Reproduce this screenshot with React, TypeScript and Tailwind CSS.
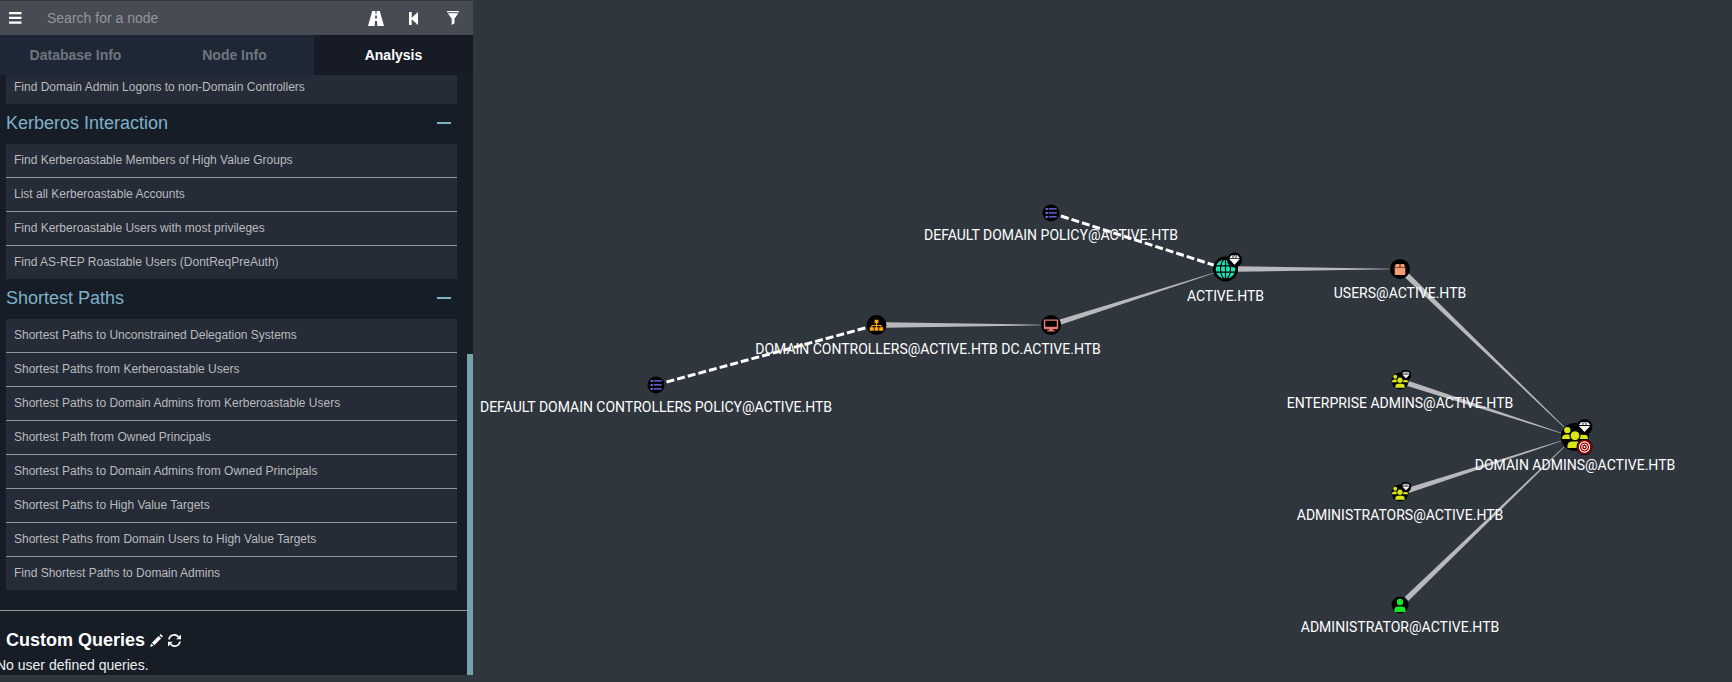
import type { ReactNode } from 'react';

type Icon = 'list' | 'sitemap' | 'globe' | 'desktop' | 'box' | 'users' | 'user';
type GraphNode = { x: number; y: number; r: number; color: string; icon: Icon; label: string; baseline: number; w: number };
type Pt = [number, number];

const nodes: GraphNode[] = [
  { x: 656, y: 385, r: 8.5, color: '#7f72fd', icon: 'list', label: 'DEFAULT DOMAIN CONTROLLERS POLICY@ACTIVE.HTB', baseline: 412, w: 352 },
  { x: 876.5, y: 325, r: 10, color: '#ffaa00', icon: 'sitemap', label: 'DOMAIN CONTROLLERS@ACTIVE.HTB', baseline: 354, w: 242.5 },
  { x: 1051, y: 213, r: 8.5, color: '#7f72fd', icon: 'list', label: 'DEFAULT DOMAIN POLICY@ACTIVE.HTB', baseline: 240, w: 254 },
  { x: 1051, y: 325, r: 10, color: '#e67873', icon: 'desktop', label: 'DC.ACTIVE.HTB', baseline: 354, w: 99.5 },
  { x: 1225.5, y: 269, r: 12.5, color: '#17e6b9', icon: 'globe', label: 'ACTIVE.HTB', baseline: 301, w: 77 },
  { x: 1400, y: 269, r: 10, color: '#f79a78', icon: 'box', label: 'USERS@ACTIVE.HTB', baseline: 298, w: 132.5 },
  { x: 1400, y: 381, r: 8.5, color: '#dbe617', icon: 'users', label: 'ENTERPRISE ADMINS@ACTIVE.HTB', baseline: 408, w: 226.5 },
  { x: 1400, y: 493, r: 8.5, color: '#dbe617', icon: 'users', label: 'ADMINISTRATORS@ACTIVE.HTB', baseline: 520, w: 206.5 },
  { x: 1400, y: 605, r: 8.5, color: '#17e625', icon: 'user', label: 'ADMINISTRATOR@ACTIVE.HTB', baseline: 632, w: 198.5 },
  { x: 1575, y: 437, r: 14, color: '#dbe617', icon: 'users', label: 'DOMAIN ADMINS@ACTIVE.HTB', baseline: 470, w: 200.5 },
];

const tapered: [Pt, Pt][] = [
  [[886, 325], [1041, 325]],
  [[1060.5, 322], [1214, 273]],
  [[1238, 269], [1390, 269]],
  [[1407, 275.5], [1564, 427]],
  [[1408, 383.5], [1561, 433]],
  [[1408, 490.5], [1561, 441]],
  [[1406.5, 599], [1564, 447]],
];

function wedge([x1, y1]: Pt, [x2, y2]: Pt) {
  const len = Math.hypot(x2 - x1, y2 - y1);
  const nx = -(y2 - y1) / len;
  const ny = (x2 - x1) / len;
  const a = 2.7;
  const b = 0.35;
  return [
    [x1 + nx * a, y1 + ny * a],
    [x2 + nx * b, y2 + ny * b],
    [x2 - nx * b, y2 - ny * b],
    [x1 - nx * a, y1 - ny * a],
  ].map((p) => p.join(',')).join(' ');
}

function Glyph({ icon, color }: { icon: Icon; color: string }) {
  switch (icon) {
    case 'list':
      return (
        <path d="M-5.300-5h2v2h-2zM-5.300-1h2v2h-2zM-5.300 3h2v2h-2zM-2.300-4.700H5.700v1.300H-2.300zM-2.300-.7H5.700V.6H-2.300zM-2.300 3.200H5.700v1.300H-2.300z" />
      );
    case 'sitemap':
      return (
        <>
          <path d="M-1.900-5.200h3.800v3.400h-3.800zM-6.700 2.200h4v3.600h-4zM-1.900 2.200h3.800v3.600h-3.800zM2.700 2.200h4v3.600h-4z" />
          <path d="M0-2v4.500M-4.700 2.500V.5h9.400v2" fill="none" stroke={color} strokeWidth="1" />
        </>
      );
    case 'globe':
      return (
        <>
          <circle r="9.800" />
          <g fill="none" stroke="#000" strokeWidth="1.200">
            <ellipse rx="5" ry="10" />
            <path d="M0-10v20M-10-3.200h20M-10 3.200h20" />
          </g>
        </>
      );
    case 'desktop':
      return (
        <path
          fillRule="evenodd"
          d="M-6.200-5.500H6.200q1 0 1 1v7.700q0 1-1 1H2V5.300h1.800v1.200h-7.600V5.300H-2V4.200h-4.200q-1 0-1-1v-7.700q0-1 1-1zM-5.700-4.200V1.700H5.700V-4.200z"
        />
      );
    case 'box':
      return <path d="M-4-5h3.600v3h-5zM.400-5H4l1 3H.400zM-5.300-1.400H5.300V5q0 1-1 1h-8.600q-1 0-1-1z" />;
    case 'users':
      return (
        <>
          <circle cx="-7.700" cy="-6.900" r="3.200" />
          <circle cx="7.700" cy="-6.900" r="3.200" />
          <path d="M-13 2q0-4.500 4-4.500h3.500L-5 2zM13 2q0-4.500-4-4.500H5.500L5 2z" />
          <circle cx="0" cy="-1.300" r="4.900" stroke="#000" strokeWidth="1" />
          <path d="M-7.500 11V9q0-4.500 4.500-4.500h6q4.500 0 4.500 4.500v2z" />
        </>
      );
    case 'user':
      return (
        <>
          <circle cx="0" cy="-3" r="3.200" />
          <path d="M-5.600 7V5.500Q-5.600 1.500-2 1.500h4q3.600 0 3.600 4V7z" />
        </>
      );
  }
}

function Diamond({ x, y, r }: { x: number; y: number; r: number }) {
  return (
    <g transform={`translate(${x} ${y}) scale(${r / 7.5})`}>
      <circle r="7.500" fill="#000" />
      <path d="M-3-4.800h6l2.300 3H-5.300zM-5.300-.9H5.300L0 4.800z" fill="#fff" />
      <path d="M-2.500-5l1 3L0-5l1.500 3 1-3" fill="none" stroke="#000" strokeWidth=".5" />
    </g>
  );
}

function Graph() {
  return (
    <svg className="block h-[682px] w-[1259px]" viewBox="473 0 1259 682">
      {tapered.map(([a, b]) => (
        <polygon key={`${a}-${b}`} points={wedge(a, b)} fill="#b8b8bd" />
      ))}
      <g stroke="#fff" strokeWidth="3" strokeDasharray="8 3">
        <path d="M666.500 382 867 327.500" />
        <path d="M1061 216 1214 265.200" />
      </g>
      {nodes.map((n) => (
        <g key={n.label}>
          <circle cx={n.x} cy={n.y} r={n.r} fill="#000" />
          <g transform={`translate(${n.x} ${n.y}) scale(${n.icon === 'users' && n.r < 10 ? 0.62 : 1})`} fill={n.color}>
            <Glyph icon={n.icon} color={n.color} />
          </g>
          <text x={n.x} y={n.baseline} textAnchor="middle" textLength={n.w} fill="#fff" className="font-['Roboto',sans-serif] text-[14px]">
            {n.label}
          </text>
        </g>
      ))}
      <Diamond x={1234.5} y={260} r={7.5} />
      <Diamond x={1406} y={375} r={5.2} />
      <Diamond x={1406} y={487} r={5.2} />
      <Diamond x={1584.5} y={427} r={8} />
      <g transform="translate(1584.500 447)" fill="none">
        <circle r="8" fill="#000" />
        <circle r="7.300" fill="#990000" />
        <circle r="5.100" stroke="#fff" strokeWidth="1.100" />
        <circle r="2.900" stroke="#fff" strokeWidth="1" />
        <circle r="1" fill="#fff" />
      </g>
    </svg>
  );
}

function QueryList({ items }: { items: string[] }) {
  return (
    <div className="ml-1.5 w-[451px] divide-y divide-[#97989b] bg-[#252b37]">
      {items.map((t, i) => (
        <div key={t} className={`${i === items.length - 1 ? 'h-[33px]' : 'h-[34px]'} pl-2 text-[12px] leading-[32px] text-[#b9bbbd]`}>
          {t}
        </div>
      ))}
    </div>
  );
}

function SectionTitle({ children }: { children: ReactNode }) {
  return (
    <div className="flex h-10 items-center justify-between pb-[2px] pl-1.5 pr-4 text-[18px] text-[#7fb1c7]">
      <span>{children}</span>
      <span className="h-0.5 w-3.5 bg-[#7fb1c7]" />
    </div>
  );
}

export default function App() {
  return (
    <div className="flex h-[682px] w-[1732px] overflow-hidden bg-[#2f363e] font-['Liberation_Sans',sans-serif]">
      <aside className="mt-px flex h-[674px] w-[473px] shrink-0 flex-col bg-[#161d27]">
        <div className="flex h-[34px] shrink-0 items-center bg-[#464b54] text-white">
          <svg className="ml-[9px] h-[13px] w-[13px]" viewBox="0 0 13 13" fill="currentColor">
            <path d="M0 0h12.500v2.200H0zM0 4.800h12.500V7H0zM0 9.600h12.500v2.200H0z" />
          </svg>
          <span className="ml-[25px] flex-1 text-[14px] text-[#94969a]">Search for a node</span>
          <svg className="mr-[25px] h-[15px] w-4" viewBox="0 0 16 15">
            <path d="M4.200 0h7.600L16 15H0z" fill="currentColor" />
            <path d="M7.400 0h1.200v2.500H7.400zM7.200 4.500h1.600l.2 3H7zM7 10h2l.3 5H6.700z" fill="#464b54" />
          </svg>
          <svg className="mr-[29px] h-[13px] w-[9px]" viewBox="0 0 9 13" fill="currentColor">
            <path d="M0 0h2.700v5.700L9 0v13L2.700 7.300V13H0z" />
          </svg>
          <svg className="mr-3.5 h-[14px] w-3" viewBox="0 0 12 14" fill="currentColor">
            <path d="M0 0h12v1.300H0zM.8 2.200h10.400L7.500 7.700v4.500L4.700 14V7.700z" />
          </svg>
        </div>
        <div className="flex h-10 shrink-0 text-center text-[14px] font-bold leading-10">
          <div className="w-[151px] bg-[#1e2735] text-[#70757d]">Database Info</div>
          <div className="w-[163px] bg-[#1e2735] pl-1 text-[#70757d]">Node Info</div>
          <div className="flex-1 bg-[#171b26] text-white">Analysis</div>
        </div>
        <div className="flex min-h-0 flex-1">
          <div className="w-[467px] overflow-hidden">
            <div className="ml-1.5 h-[29px] w-[451px] bg-[#252b37] pl-2 text-[12px] leading-6 text-[#b9bbbd]">Find Domain Admin Logons to non-Domain Controllers</div>
            <SectionTitle>Kerberos Interaction</SectionTitle>
            <QueryList
              items={[
                'Find Kerberoastable Members of High Value Groups',
                'List all Kerberoastable Accounts',
                'Find Kerberoastable Users with most privileges',
                'Find AS-REP Roastable Users (DontReqPreAuth)',
              ]}
            />
            <SectionTitle>Shortest Paths</SectionTitle>
            <QueryList
              items={[
                'Shortest Paths to Unconstrained Delegation Systems',
                'Shortest Paths from Kerberoastable Users',
                'Shortest Paths to Domain Admins from Kerberoastable Users',
                'Shortest Path from Owned Principals',
                'Shortest Paths to Domain Admins from Owned Principals',
                'Shortest Paths to High Value Targets',
                'Shortest Paths from Domain Users to High Value Targets',
                'Find Shortest Paths to Domain Admins',
              ]}
            />
            <div className="mt-5 h-px bg-[#97989b]" />
            <div className="mt-[19px] flex h-5 items-center pl-1.5 text-white">
              <h2 className="text-[18px] font-bold leading-5">Custom Queries</h2>
              <svg className="ml-[5px] h-[13px] w-[13px]" viewBox="0 0 13 13" fill="currentColor">
                <path d="M0 13l1.200-3.500L3.500 11.800zM1.900 8.800 8.700 2l2.400 2.400-6.800 6.800zM9.500 1.200 10.700 0 13 2.300l-1.200 1.300z" />
              </svg>
              <svg className="ml-[5px] h-[13px] w-[13px]" viewBox="0 0 13 13" fill="none" stroke="currentColor" strokeWidth="1.700">
                <path d="M1 5.500A5.300 5.300 0 0 1 10.500 3M12 7.500A5.300 5.300 0 0 1 2.500 10" />
                <path d="M13 .5v4.700H8.300zM0 12.500V7.800h4.700z" fill="currentColor" stroke="none" />
              </svg>
            </div>
            <p className="-ml-[4px] mt-[5px] text-[14px] leading-5 text-[#eeeeee]">No user defined queries.</p>
          </div>
          <div className="mt-[279px] w-1.5 bg-[#76a3aa]" />
        </div>
      </aside>
      <main className="w-[1259px] shrink-0">
        <Graph />
      </main>
    </div>
  );
}
